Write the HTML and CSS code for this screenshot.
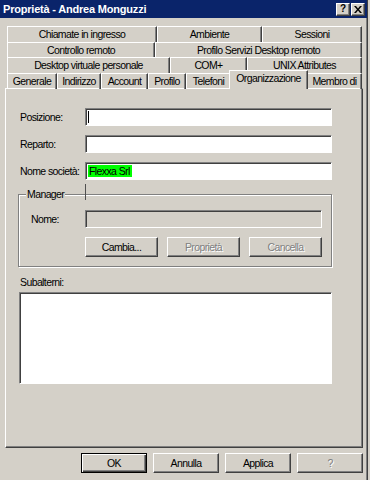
FILE: index.html
```html
<!DOCTYPE html>
<html lang="it">
<head>
    <meta charset="UTF-8">
    <title>Proprietà - Andrea Monguzzi</title>
    <link rel="stylesheet" href="styles.css">
</head>
<body>
    <div class="window">
        <div class="titlebar">
            <span class="title">Proprietà - Andrea Monguzzi</span>
            <div class="caption-buttons">
                <span class="cap-btn">?</span>
                <span class="cap-btn close">
                    <svg width="8" height="7" viewBox="0 0 8 7"><path d="M0 0h2l2 2.5L6 0h2L5 3.5 8 7H6L4 4.5 2 7H0l3-3.5z" fill="#000"/></svg>
                </span>
            </div>
        </div>

        <div class="tabs">
            <div class="tab-row row1">
                <div class="tab">Chiamate in ingresso</div>
                <div class="tab">Ambiente</div>
                <div class="tab">Sessioni</div>
            </div>
            <div class="tab-row row2">
                <div class="tab">Controllo remoto</div>
                <div class="tab">Profilo Servizi Desktop remoto</div>
            </div>
            <div class="tab-row row3">
                <div class="tab">Desktop virtuale personale</div>
                <div class="tab">COM+</div>
                <div class="tab">UNIX Attributes</div>
            </div>
            <div class="tab-row row4">
                <div class="tab">Generale</div>
                <div class="tab">Indirizzo</div>
                <div class="tab">Account</div>
                <div class="tab">Profilo</div>
                <div class="tab">Telefoni</div>
                <div class="tab selected">Organizzazione</div>
                <div class="tab">Membro di</div>
            </div>
        </div>

        <div class="panel">
            <div class="field">
                <label>Posizione:</label>
                <div class="input"><span class="caret"></span></div>
            </div>
            <div class="field">
                <label>Reparto:</label>
                <div class="input"></div>
            </div>
            <div class="field">
                <label>Nome società:</label>
                <div class="input"><span class="selection">Flexxa Srl</span></div>
            </div>

            <div class="group">
                <span class="group-title">Manager</span>
                <span class="artifact"></span>
                <div class="field inner">
                    <label>Nome:</label>
                    <div class="input disabled"></div>
                </div>
                <div class="group-buttons">
                    <button class="btn">Cambia...</button>
                    <button class="btn" disabled>Proprietà</button>
                    <button class="btn" disabled>Cancella</button>
                </div>
            </div>

            <div class="list-label">Subalterni:</div>
            <div class="listbox"></div>
        </div>

        <div class="dialog-buttons">
            <button class="btn default">OK</button>
            <button class="btn">Annulla</button>
            <button class="btn">Applica</button>
            <button class="btn" disabled>?</button>
        </div>
    </div>
</body>
</html>
```

FILE: styles.css
```css
body {
    margin: 0;
    background: #d4d0c8;
    font-family: "Liberation Sans", Arial, sans-serif;
    font-size: 10.5px;
    letter-spacing: -0.6px;
    color: #000;
}
.window {
    width: 367px;
    height: 480px;
    background: #d4d0c8;
    border-right: 1px solid #404040;
    box-shadow: inset -1px 0 0 #808080;
}
.titlebar {
    height: 18px;
    background: #0a246a;
    display: flex;
    align-items: center;
    justify-content: space-between;
    padding: 0 2px 0 3px;
}
.title {
    color: #fff;
    font-weight: bold;
    font-size: 11px;
    letter-spacing: -0.2px;
}
.caption-buttons {
    display: flex;
    gap: 1px;
}
.cap-btn {
    width: 14px;
    height: 13px;
    box-sizing: border-box;
    background: #d4d0c8;
    border: 1px solid;
    border-color: #fff #404040 #404040 #fff;
    box-shadow: inset -1px -1px 0 #808080;
    font-weight: bold;
    font-size: 10px;
    letter-spacing: 0;
    line-height: 10px;
    display: flex;
    align-items: center;
    justify-content: center;
}

/* schede */
.tabs {
    margin: 8px 6px 0 7px;
}
.tab-row {
    display: grid;
    height: 16px;
}
.row2, .row4 {
    height: 15px;
}
.row1 { grid-template-columns: 150px 105px 100px; }
.row2 { grid-template-columns: 148px 207px; }
.row3 { grid-template-columns: 163px 77px 115px; }
.row4 { grid-template-columns: 50px 44px 47px 38px 45px 76px 55px; }
.tab {
    box-sizing: border-box;
    border-top: 1px solid #fff;
    border-left: 1px solid #fff;
    border-right: 1px solid #404040;
    box-shadow: inset -1px 0 0 #808080;
    text-align: center;
    line-height: 15px;
    white-space: nowrap;
    overflow: hidden;
}
.tab.selected {
    position: relative;
    z-index: 1;
    margin: -3px -1px 0 -2px;
    height: 19px;
    line-height: 14px;
    background: #d4d0c8;
}

/* pannello */
.panel {
    margin-left: 5px;
    width: 358px;
    height: 360px;
    box-sizing: border-box;
    border: 1px solid;
    border-color: #fff #404040 #404040 #fff;
    box-shadow: inset -1px -1px 0 #808080;
    padding: 19px 0 0 13px;
}
.field {
    display: flex;
    align-items: center;
    margin-bottom: 9px;
}
.field label {
    width: 65px;
    white-space: nowrap;
    padding-left: 1px;
}
.input {
    width: 247px;
    height: 18px;
    box-sizing: border-box;
    background: #fff;
    border: 1px solid;
    border-color: #808080 #fff #fff #808080;
    box-shadow: inset 1px 1px 0 #404040;
    padding: 2px 2px 0 2px;
    display: flex;
    align-items: flex-start;
}
.input.disabled {
    background: #d4d0c8;
    width: 237px;
}
.caret {
    width: 1px;
    height: 12px;
    background: #000;
}
.selection {
    background: #00ff00;
    line-height: 12px;
    padding: 0 2px 0 1px;
}

/* gruppo */
.group {
    position: relative;
    margin: 14px 0 0 -1px;
    width: 314px;
    height: 73px;
    box-sizing: border-box;
    border: 1px solid #808080;
    box-shadow: 1px 1px 0 #fff, inset 1px 1px 0 #fff;
    padding: 15px 0 0 11px;
}
.group-title {
    position: absolute;
    left: 7px;
    top: -7px;
    padding: 0 1px;
    background: #d4d0c8;
    line-height: 13px;
}
.artifact {
    position: absolute;
    left: 66px;
    top: -11px;
    width: 1px;
    height: 16px;
    background: #505050;
}
.group .field {
    margin-bottom: 9px;
}
.field.inner label {
    width: 54px;
}
.group-buttons {
    display: flex;
    gap: 9px;
    margin-left: 55px;
}
.btn {
    width: 73px;
    height: 20px;
    box-sizing: border-box;
    background: #d4d0c8;
    border: 1px solid;
    border-color: #fff #404040 #404040 #fff;
    box-shadow: inset -1px -1px 0 #808080;
    font-family: "Liberation Sans", Arial, sans-serif;
    font-size: 10.5px;
    letter-spacing: -0.6px;
    color: #000;
    padding: 0;
}
.btn:disabled {
    color: #808080;
    text-shadow: 1px 1px 0 #fff;
}
.list-label {
    margin: 9px 0 3px 1px;
    line-height: 13px;
}
.listbox {
    width: 313px;
    height: 92px;
    box-sizing: border-box;
    background: #fff;
    border: 1px solid;
    border-color: #808080 #fff #fff #808080;
    box-shadow: inset 1px 1px 0 #404040;
}

/* pulsanti finestra */
.dialog-buttons {
    display: flex;
    justify-content: flex-end;
    gap: 6px;
    width: 363px;
    margin-top: 5px;
}
.dialog-buttons .btn {
    width: 66px;
}
.btn.default {
    border: 1px solid #000;
    box-shadow: inset 1px 1px 0 #fff, inset -1px -1px 0 #404040, inset -2px -2px 0 #808080;
}
```
